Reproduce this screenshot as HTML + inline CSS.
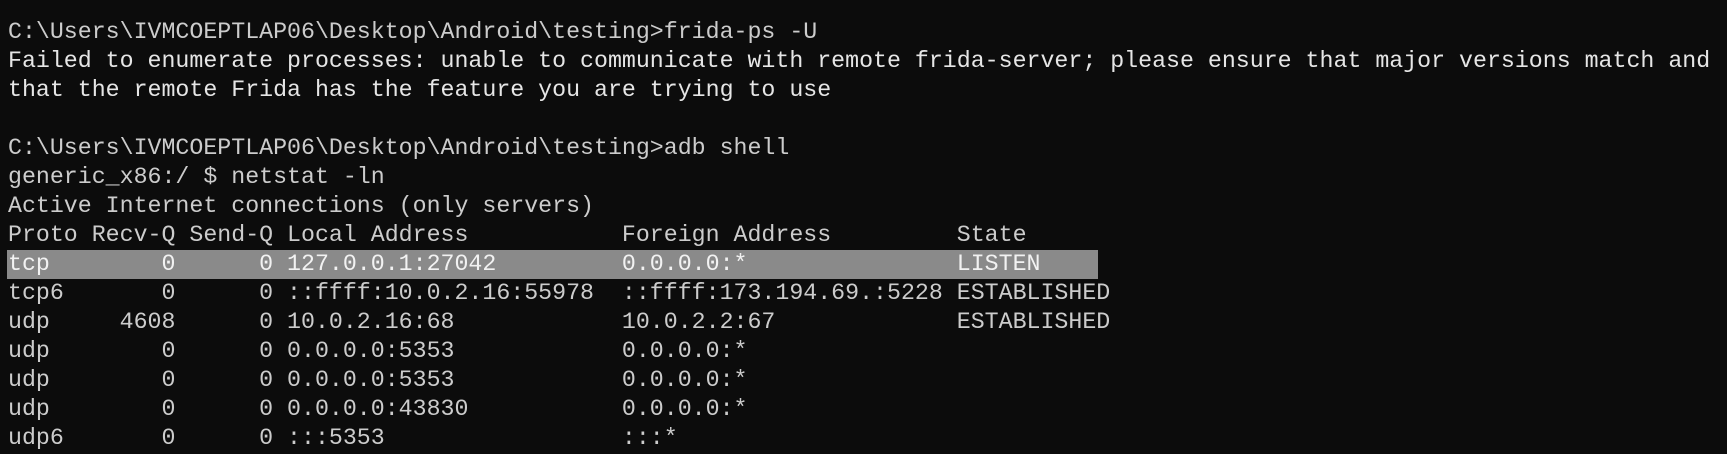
<!DOCTYPE html>
<html><head><meta charset="utf-8"><style>
html,body{margin:0;padding:0;background:#0c0c0c;width:1727px;height:454px;overflow:hidden}
pre{margin:0;position:absolute;left:8px;top:18px;font-family:"Liberation Mono",monospace;font-size:23.25px;line-height:29px;color:#cccccc;white-space:pre}
.w{color:#e6e6e6}
.hl{background:#8a8a8a;color:#f2f2f2;display:inline-block;width:1090px;margin-left:-1px;padding-left:1px}
</style></head><body>
<pre>C:\Users\IVMCOEPTLAP06\Desktop\Android\testing>frida-ps -U
<span class="w">Failed to enumerate processes: unable to communicate with remote frida-server; please ensure that major versions match and</span>
<span class="w">that the remote Frida has the feature you are trying to use</span>

C:\Users\IVMCOEPTLAP06\Desktop\Android\testing>adb shell
generic_x86:/ $ netstat -ln
Active Internet connections (only servers)
Proto Recv-Q Send-Q Local Address           Foreign Address         State
<span class="hl">tcp        0      0 127.0.0.1:27042         0.0.0.0:*               LISTEN</span>
tcp6       0      0 ::ffff:10.0.2.16:55978  ::ffff:173.194.69.:5228 ESTABLISHED
udp     4608      0 10.0.2.16:68            10.0.2.2:67             ESTABLISHED
udp        0      0 0.0.0.0:5353            0.0.0.0:*
udp        0      0 0.0.0.0:5353            0.0.0.0:*
udp        0      0 0.0.0.0:43830           0.0.0.0:*
udp6       0      0 :::5353                 :::*</pre>
</body></html>
